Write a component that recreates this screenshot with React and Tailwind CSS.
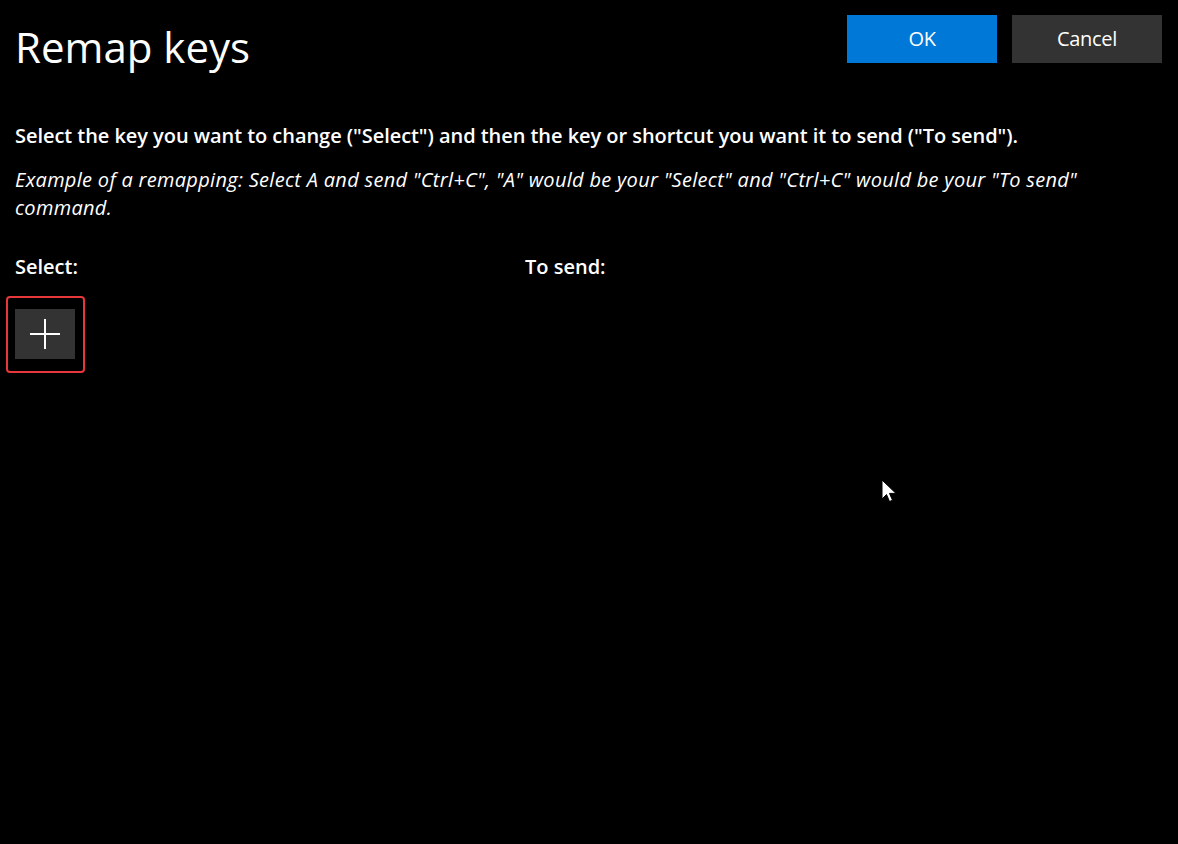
import React from 'react';

function PlusIcon() {
  return (
    <svg width="32" height="32" viewBox="0 0 32 32" fill="none">
      <path d="M16 1v30M1 16h30" stroke="white" strokeWidth="2" />
    </svg>
  );
}

export default function App() {
  return (
    <div className="relative w-[1178px] h-[844px] bg-black text-white overflow-hidden font-['Open_Sans','Noto_Sans',sans-serif]">
      {/* Header */}
      <div className="flex items-start justify-between pl-[15px] pr-[16px] pt-[15px]">
        <h1 className="text-[42px] leading-[68px] mt-[-2px] font-normal">Remap keys</h1>
        <div className="flex gap-[15px]">
          <button className="w-[150px] h-[48px] bg-[#0078d7] text-[20px] tracking-[-0.3px]">OK</button>
          <button className="w-[150px] h-[48px] bg-[#333333] text-[20px] tracking-[-0.3px]">Cancel</button>
        </div>
      </div>

      {/* Description */}
      <div className="px-[15px] mt-[41px]">
        <p className="text-[20px] font-semibold leading-[28px] tracking-[-0.05px]">
          Select the key you want to change ("Select") and then the key or shortcut you want it to send ("To send").
        </p>
        <p className="text-[20px] italic leading-[28px] mt-[16px] max-w-[1100px] tracking-[0.3px]">
          Example of a remapping: Select A and send "Ctrl+C", "A" would be your "Select" and "Ctrl+C" would be your "To send" command.
        </p>
      </div>

      {/* Columns */}
      <div className="grid grid-cols-[510px_1fr] px-[15px] mt-[31px]">
        <div className="text-[20px] font-semibold leading-[28px]">Select:</div>
        <div className="text-[20px] font-semibold leading-[28px]">To send:</div>
      </div>

      <div className="ml-[6px] mt-[15px] w-[79px] h-[77px] border-2 border-[#e8373a] rounded-[4px] pl-[7px] pt-[11px]">
        <button className="w-[60px] h-[50px] bg-[#333333] flex items-center justify-center">
          <PlusIcon />
        </button>
      </div>

      {/* Mouse pointer */}
      <svg className="absolute left-[881px] top-[479px]" width="16" height="26" viewBox="0 0 16 26">
        <path d="M1 1v19l4.5-4.5 3 7 3-1.3-3-6.8H15z" fill="white" stroke="black" strokeWidth="1" />
      </svg>
    </div>
  );
}
